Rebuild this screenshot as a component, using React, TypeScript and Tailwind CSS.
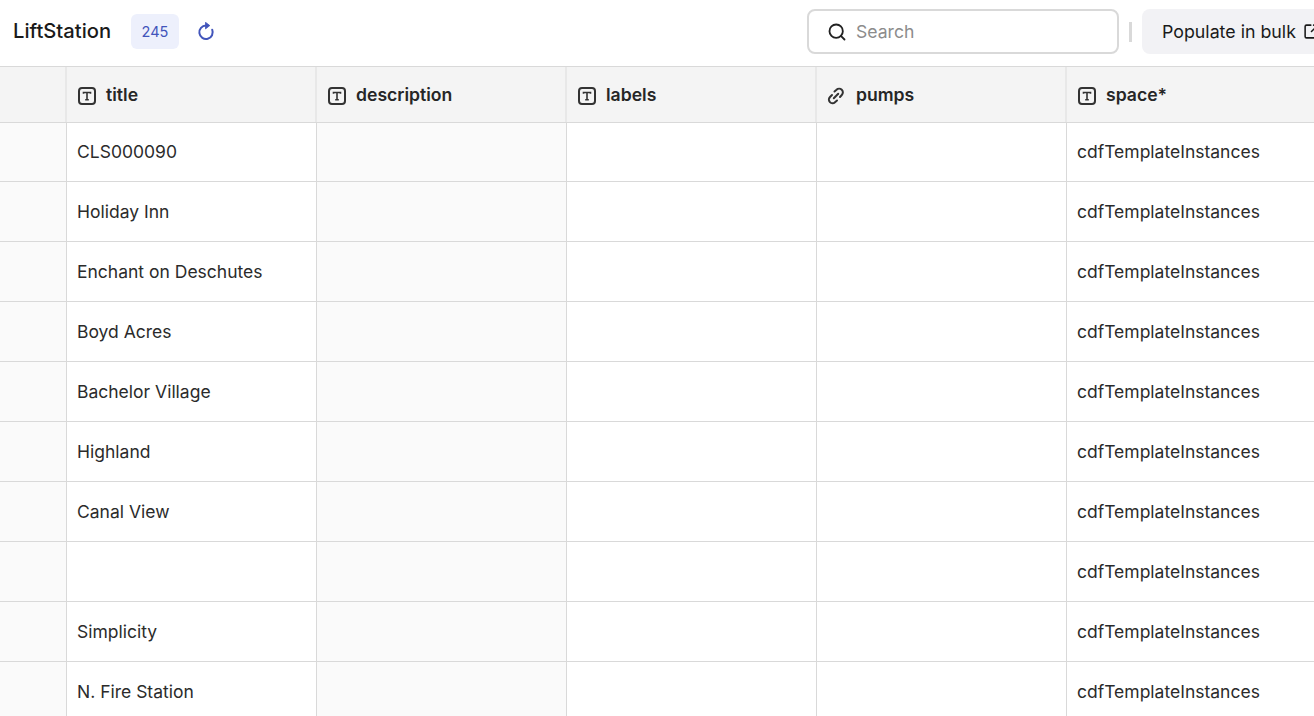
import { Search, SquareArrowOutUpRight } from "lucide-react";

const rows = [
  "CLS000090",
  "Holiday Inn",
  "Enchant on Deschutes",
  "Boyd Acres",
  "Bachelor Village",
  "Highland",
  "Canal View",
  "",
  "Simplicity",
  "N. Fire Station",
];

const columns = [
  { name: "title", link: false },
  { name: "description", link: false },
  { name: "labels", link: false },
  { name: "pumps", link: true },
  { name: "space*", link: false },
];

function TextIcon() {
  return (
    <svg width="18" height="18" viewBox="0 0 18 18" fill="none" stroke="#333" strokeWidth="2" className="shrink-0">
      <rect x="1" y="1" width="16" height="16" rx="3" />
      <path d="M5.5 6.8V5.5H12.5V6.8M9 5.5V12.7M7.2 12.7H10.8" strokeWidth="1.6" />
    </svg>
  );
}

function LinkIcon() {
  return (
    <svg width="18" height="18" viewBox="0 0 18 18" fill="none" stroke="#333" strokeWidth="2" strokeLinecap="round" className="shrink-0 -ml-[1px] mr-[1px]">
      <path d="M7.5 4.5L9.5 2.8A3.4 3.4 0 0 1 14.8 8L13 10" />
      <path d="M5 8L3 10A3.4 3.4 0 0 0 8 15.2L10 13.5" />
      <path d="M6.8 11.2L11.2 6.8" />
    </svg>
  );
}

function RefreshIcon() {
  return (
    <svg width="18" height="20" viewBox="0 0 18 20" fill="none" className="shrink-0 text-[#4255bb]">
      <path d="M9 3.6A6.7 6.7 0 1 0 15.2 7.7" stroke="currentColor" strokeWidth="2" strokeLinecap="round" />
      <path d="M8.5 0.3L12.8 3.6L8.5 6.9Z" fill="currentColor" stroke="currentColor" strokeWidth="0.8" strokeLinejoin="round" />
    </svg>
  );
}

function App() {
  return (
    <div className="w-[1314px] h-[716px] overflow-hidden bg-white font-['Inter',sans-serif] text-[#2b2b2b]">
      <header className="h-[67px] flex items-center border-b border-[#d9d9d9] pl-[13px] pb-[3px]">
        <h1 className="w-[118px] shrink-0 text-[20.2px] font-medium text-[#1a1a1a]">LiftStation</h1>
        <span className="w-[48px] h-[35px] shrink-0 flex items-center justify-center rounded-md bg-[#edf0fc] text-[14.5px] text-[#4255bb]">245</span>
        <div className="ml-[18px]">
          <RefreshIcon />
        </div>
        <div className="ml-[592px] w-[312px] h-[45px] shrink-0 flex items-center border-2 border-[#d9d9d9] rounded-lg pl-[18px]">
          <Search size={20} strokeWidth={2.2} className="text-[#212121]" />
          <span className="ml-[9px] pt-[2px] text-[17.6px] text-[#8c8c8c]">Search</span>
        </div>
        <div className="ml-[10px] w-[3px] h-[20px] shrink-0 bg-[#d9d9d9]" />
        <button className="ml-[10px] h-[45px] w-[200px] shrink-0 flex items-center gap-[7px] rounded-lg bg-[#f2f2f5] pl-[20px] text-[17.8px] text-[#1a1a1a]">
          <span className="pt-[2px]">Populate in bulk</span>
          <SquareArrowOutUpRight size={17} strokeWidth={2.2} className="shrink-0" />
        </button>
      </header>

      <div className="flex h-[56px] bg-[#f4f4f4] border-b border-[#d9d9d9]">
        <div className="w-[67px] shrink-0 border-r-2 border-[#e8e8e8]" />
        {columns.map((col) => (
          <div key={col.name} className="w-[250px] shrink-0 flex items-center gap-[10px] pl-[11px] pt-[2px] border-r-2 border-[#e8e8e8] text-[17.6px] font-semibold text-[#262626]">
            {col.link ? <LinkIcon /> : <TextIcon />}
            {col.name}
          </div>
        ))}
      </div>

      {rows.map((title, i) => (
        <div key={i} className={`flex border-b border-[#d9d9d9] text-[17.5px] ${i === 0 ? "h-[59px]" : "h-[60px]"}`}>
          <div className="w-[67px] shrink-0 bg-[#fafafa] border-r border-[#d9d9d9]" />
          <div className={`w-[250px] shrink-0 flex items-center pl-[10px] border-r border-[#d9d9d9] ${i === 0 ? "" : "pt-[2px]"}`}>{title}</div>
          <div className="w-[250px] shrink-0 bg-[#fafafa] border-r border-[#d9d9d9]" />
          <div className="w-[250px] shrink-0 border-r border-[#d9d9d9]" />
          <div className="w-[250px] shrink-0 border-r border-[#d9d9d9]" />
          <div className={`w-[250px] shrink-0 flex items-center pl-[10px] ${i === 0 ? "" : "pt-[2px]"}`}>cdfTemplateInstances</div>
        </div>
      ))}
    </div>
  );
}

export default App;
